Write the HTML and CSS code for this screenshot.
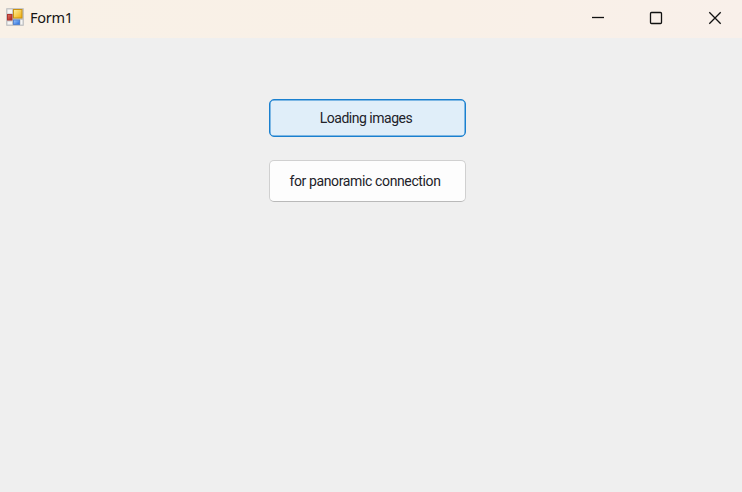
FILE: index.html
```html
<!DOCTYPE html>
<html lang="en">
<head>
<meta charset="utf-8">
<title>Form1</title>
<link rel="stylesheet" href="styles.css">
</head>
<body>
<div class="window">
  <header class="titlebar">
    <svg class="app-icon" width="18" height="18" viewBox="0 0 18 18">
      <defs>
        <linearGradient id="gold" x1="0" y1="0" x2="1" y2="1"><stop offset="0" stop-color="#fff0a0"/><stop offset="1" stop-color="#efac08"/></linearGradient>
        <linearGradient id="red" x1="0" y1="0" x2="1" y2="1"><stop offset="0" stop-color="#e07868"/><stop offset="1" stop-color="#b01c18"/></linearGradient>
        <linearGradient id="blue" x1="0" y1="0" x2="1" y2="1"><stop offset="0" stop-color="#a0ccff"/><stop offset="1" stop-color="#2468d8"/></linearGradient>
      </defs>
      <rect width="18" height="18" rx="1" fill="#c6c6c6"/>
      <path d="M1.5 1.5h4.5v4H1.5zM1.5 13.5h4.5v3H1.5zM14.5 12h2v4.500h-2z" fill="#f6f6f6"/>
      <rect x="7.500" y="1.500" width="8.500" height="8.500" fill="url(#gold)" stroke="#c99110"/>
      <rect x="1.500" y="6.500" width="4.500" height="5.500" fill="url(#red)" stroke="#ad3430"/>
      <rect x="7.500" y="12" width="6" height="4.500" fill="url(#blue)" stroke="#5585d0"/>
    </svg>
    <h1 class="title">Form1</h1>
    <div class="controls">
      <svg class="control" width="14" height="14" viewBox="0 0 14 14"><path d="M1 6.500h12"/></svg>
      <svg class="control" width="14" height="14" viewBox="0 0 14 14"><rect x="1.500" y="1.500" width="11" height="11" rx="1"/></svg>
      <svg class="control" width="14" height="14" viewBox="0 0 14 14"><path d="M1.300 1.300l11.400 11.400M12.700 1.300L1.300 12.700"/></svg>
    </div>
  </header>
  <main class="form">
    <button class="button button-active"><span class="load-label">Loading images</span></button>
    <button class="button button-plain"><span class="connect-label">for panoramic connection</span></button>
  </main>
</div>
</body>
</html>
```
FILE: styles.css
```css
body {
  margin: 0;
  background: #efefef;
  color: #151515;
}

.window {
  height: 492px;
  overflow: hidden;
}

.titlebar {
  box-sizing: border-box;
  display: flex;
  align-items: flex-start;
  height: 38px;
  padding: 8px 20px 0 6px;
  background: linear-gradient(90deg, #f9f1e7, #f9f0e7 60%, #f9f0ea);
}

.app-icon {
  display: block;
}

.title {
  margin: -1px 0 0 6px;
  font: 400 14.500px/20px "Noto Sans", sans-serif;
  letter-spacing: -0.3px;
}

.controls {
  display: grid;
  grid-template-columns: 58px 59px 14px;
  margin: 3px 0 0 auto;
}

.control {
  display: block;
  fill: none;
  stroke: #111;
  stroke-width: 1.300;
}

.form {
  display: flex;
  flex-direction: column;
  align-items: center;
  gap: 23px;
  padding: 61px 7px 0 0;
}

.button {
  box-sizing: border-box;
  width: 197px;
  padding: 0;
  border: 1px solid #d0d0d0;
  border-radius: 5px;
  color: #222229;
  font: 400 14px/18px Roboto, sans-serif;
  white-space: nowrap;
}

.button-active {
  height: 38px;
  border-color: #1a80cf;
  background: #e0eef9;
  box-shadow: inset 0 0 0 0.500px #1a80cf;
}

.button-plain {
  height: 42px;
  border-bottom-color: #b9b9b9;
  background: #fdfdfd;
}

.load-label {
  letter-spacing: -0.48px;
  margin-right: 3px;
}

.connect-label {
  letter-spacing: -0.37px;
  margin-right: 5px;
}
```
